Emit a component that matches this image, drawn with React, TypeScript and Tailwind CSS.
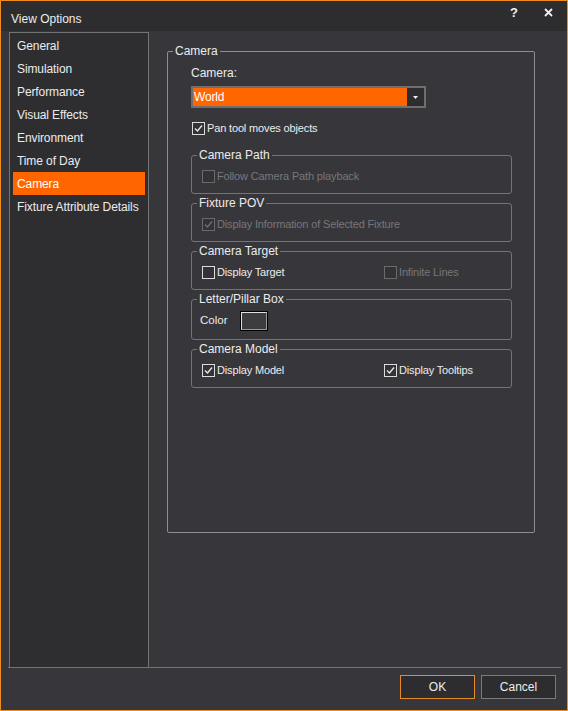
import React from "react";

const F = { fontFamily: '"Liberation Sans", Arial, sans-serif' };

function Check({ checked, disabled }: { checked?: boolean; disabled?: boolean }) {
  const c = disabled ? "#6f6f6f" : "#e6e6e6";
  return (
    <span
      className={`inline-flex w-[13px] h-[13px] shrink-0 items-center justify-center border ${
        disabled ? "border-[#6a6a6a]" : "border-[#dcdcdc]"
      } bg-[#333236]`}
    >
      {checked && (
        <svg width="9" height="9" viewBox="0 0 9 9">
          <path d="M1 4.5 L3.5 7 L8 1.5" fill="none" stroke={c} strokeWidth="1.4" />
        </svg>
      )}
    </span>
  );
}

function CheckRow({ label, checked, disabled }: { label: string; checked?: boolean; disabled?: boolean }) {
  return (
    <div className="flex items-center gap-[2px] h-[14px]">
      <Check checked={checked} disabled={disabled} />
      <span
        className={`text-[11px] leading-[14px] tracking-[-0.15px] ${disabled ? "text-[#77777a]" : "text-[#ececec]"}`}
      >
        {label}
      </span>
    </div>
  );
}

function Group({ title, children, padTop = "pt-[7px]", padBottom = "pb-[10px]" }: { title: string; children: React.ReactNode; padTop?: string; padBottom?: string }) {
  return (
    <fieldset className="m-0 p-0 border border-[#747474] rounded-[3px] min-w-0">
      <legend className="ml-[5px] px-[2px] text-[12px] leading-[14px] text-[#ececec]">{title}</legend>
      <div className={`pl-[10px] ${padTop} ${padBottom}`}>{children}</div>
    </fieldset>
  );
}

const items = [
  "General",
  "Simulation",
  "Performance",
  "Visual Effects",
  "Environment",
  "Time of Day",
  "Camera",
  "Fixture Attribute Details",
];

export default function App() {
  return (
    <div style={F} className="w-[568px] h-[711px] border border-[#f28b1d] bg-[#37363b] flex flex-col select-none">
      {/* Title bar */}
      <div className="h-[30px] shrink-0 bg-[#2d2d30] flex items-center justify-between pl-[10px] pt-[6px]">
        <span className="text-[12px] text-[#ececec]">View Options</span>
        <div className="flex items-center h-full pb-[13px]">
          <span className="text-[13px] font-bold text-[#f0f0f0] mr-[26px]">?</span>
          <svg width="9" height="9" viewBox="0 0 9 9" className="mr-[14px]">
            <path d="M1 1 L8 8 M8 1 L1 8" stroke="#f0f0f0" strokeWidth="1.8" />
          </svg>
        </div>
      </div>

      {/* Body */}
      <div className="flex h-[636px] shrink-0 pt-[1px]">
        <div className="ml-[8px] w-[140px] h-full border-t border-l border-r border-[#747474] bg-[#2e2e31] pt-[1px]">
          {items.map((it) => (
            <div
              key={it}
              className={`mx-[3px] h-[23px] flex items-center pl-[4px] text-[12px] tracking-[-0.1px] ${
                it === "Camera" ? "bg-[#ff6600] text-white" : "text-[#ececec]"
              }`}
            >
              {it}
            </div>
          ))}
        </div>

        <div className="ml-[18px] mt-[12px]">
          <fieldset className="m-0 p-0 w-[368px] h-[489px] border border-[#8e8e8e] rounded-[2px]">
            <legend className="ml-[5px] px-[2px] text-[12px] leading-[14px] text-[#ececec]">Camera</legend>
            <div className="pl-[23px] pt-[8px]">
              <div className="text-[12px] leading-[14px] text-[#ececec]">Camera:</div>
              <div className="mt-[6px] w-[235px] h-[22px] border-2 border-[#6e6e6e] flex">
                <div className="flex-1 bg-[#ff6600] flex items-center pl-[1px] text-[12px] text-white tracking-[-0.2px]">
                  World
                </div>
                <div className="w-[17px] bg-[#2d2d30] flex items-center justify-center">
                  <svg width="5" height="3" viewBox="0 0 5 3">
                    <path d="M0 0 H5 L2.5 3 Z" fill="#f0f0f0" />
                  </svg>
                </div>
              </div>
              <div className="mt-[13px] ml-[1px]">
                <CheckRow label="Pan tool moves objects" checked />
              </div>
              <div className="mt-[13px] w-[321px] flex flex-col gap-[2px]">
                <Group title="Camera Path">
                  <CheckRow label="Follow Camera Path playback" disabled />
                </Group>
                <Group title="Fixture POV">
                  <CheckRow label="Display Information of Selected Fixture" checked disabled />
                </Group>
                <Group title="Camera Target">
                  <div className="grid grid-cols-[182px_1fr]">
                    <CheckRow label="Display Target" />
                    <CheckRow label="Infinite Lines" disabled />
                  </div>
                </Group>
                <Group title="Letter/Pillar Box" padTop="pt-[5px]" padBottom="pb-[8px]">
                  <div className="flex items-center -ml-[2px]">
                    <span className="text-[11.5px] text-[#ececec] w-[40px]">Color</span>
                    <div className="w-[28px] h-[20px] border border-black">
                      <div className="w-full h-full border border-t-[#e0e0e0] border-l-[#e0e0e0] border-r-[#9a9a9a] border-b-[#9a9a9a] bg-[#3c3c3e]" />
                    </div>
                  </div>
                </Group>
                <Group title="Camera Model">
                  <div className="grid grid-cols-[182px_1fr]">
                    <CheckRow label="Display Model" checked />
                    <CheckRow label="Display Tooltips" checked />
                  </div>
                </Group>
              </div>
            </div>
          </fieldset>
        </div>
      </div>

      {/* Separator */}
      <div className="ml-[7px] w-[553px] h-[1px] bg-[#747474] shrink-0" />

      {/* Footer */}
      <div className="flex justify-end gap-[6px] pr-[11px] pt-[7px]">
        <button className="w-[75px] h-[24px] border border-[#e8892a] bg-[#2d2d30] text-[12px] text-[#ececec]">OK</button>
        <button className="w-[75px] h-[24px] border border-[#7a7a7a] bg-[#2d2d30] text-[12px] text-[#ececec]">Cancel</button>
      </div>
    </div>
  );
}
